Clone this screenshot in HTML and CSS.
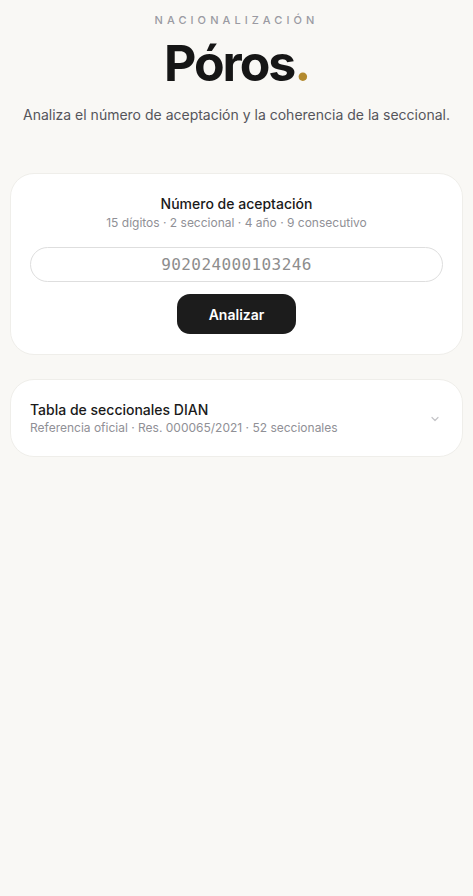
FILE: index.html
```html
<!DOCTYPE html>
<html lang="es">
<head>
    <meta charset="UTF-8">
    <meta name="viewport" content="width=device-width, initial-scale=1.0">
    <title>Póros</title>
    <link rel="stylesheet" href="styles.css">
</head>
<body>
    <main class="page">
        <header class="hero">
            <div class="eyebrow">Nacionalización</div>
            <h1 class="brand">Póros<span class="dot">.</span></h1>
            <p class="lead">Analiza el número de aceptación y la coherencia de la seccional.</p>
        </header>

        <section class="card analyzer">
            <h2 class="card-title">Número de aceptación</h2>
            <p class="card-sub">15 dígitos · 2 seccional · 4 año · 9 consecutivo</p>
            <input class="code-input" type="text" placeholder="902024000103246" maxlength="15">
            <button class="btn" type="button">Analizar</button>
        </section>

        <section class="card table-toggle">
            <div class="toggle-text">
                <h2 class="toggle-title">Tabla de seccionales DIAN</h2>
                <p class="toggle-sub">Referencia oficial · Res. 000065/2021 · 52 seccionales</p>
            </div>
            <svg class="chevron" width="12" height="12" viewBox="0 0 12 12" fill="none">
                <path d="M3 4.5l3 3 3-3" stroke="#c4c4c8" stroke-width="1.2" stroke-linecap="round" stroke-linejoin="round"/>
            </svg>
        </section>
    </main>
</body>
</html>
```

FILE: styles.css
```css
body {
    margin: 0;
    background-color: #f9f8f5;
    font-family: Inter, "Noto Sans", sans-serif;
    color: #1a1a1a;
}
.page {
    padding: 13px 10px 40px;
}
.hero {
    text-align: center;
}
.eyebrow {
    font-size: 11px;
    font-weight: 500;
    letter-spacing: 0.37em;
    text-transform: uppercase;
    color: #9a9aa2;
    line-height: 14px;
}
.brand {
    margin: 8px 0 0;
    font-size: 50px;
    font-weight: 700;
    letter-spacing: -0.04em;
    line-height: 56px;
    color: #161616;
}
.dot {
    color: #b38a2e;
}
.lead {
    margin: 14px 0 0;
    font-size: 14px;
    color: #55555b;
    line-height: 20px;
}
.card {
    background: #fff;
    border: 1px solid #efeeea;
    border-radius: 24px;
}
.analyzer {
    margin-top: 48px;
    padding: 20px 19px 20px;
    display: flex;
    flex-direction: column;
    align-items: center;
}
.card-title {
    margin: 0;
    font-size: 14px;
    font-weight: 500;
    line-height: 20px;
}
.card-sub {
    margin: 1px 0 0;
    font-size: 12px;
    color: #909096;
    line-height: 16px;
}
.code-input {
    box-sizing: border-box;
    margin-top: 16px;
    width: 100%;
    height: 35px;
    border: 1px solid #dedede;
    border-radius: 18px;
    background: #fff;
    font-family: "DejaVu Sans Mono", "Liberation Mono", monospace;
    font-size: 16px;
    text-align: center;
    color: #1a1a1a;
    letter-spacing: 0.4px;
    outline: none;
}
.code-input::placeholder {
    color: #8d8d8d;
}
.btn {
    margin-top: 12px;
    width: 119px;
    height: 40px;
    border: none;
    border-radius: 13px;
    background-color: #1c1c1c;
    color: #fff;
    font-family: Inter, sans-serif;
    font-size: 14px;
    font-weight: 600;
    cursor: pointer;
}
.table-toggle {
    margin-top: 24px;
    padding: 21px 19px 20px;
    display: flex;
    align-items: center;
    justify-content: space-between;
}
.toggle-title {
    margin: 0;
    font-size: 14px;
    font-weight: 500;
    line-height: 18px;
}
.toggle-sub {
    margin: 1px 0 0;
    font-size: 12px;
    color: #909096;
    line-height: 16px;
}
.chevron {
    margin-right: 2px;
}
```
